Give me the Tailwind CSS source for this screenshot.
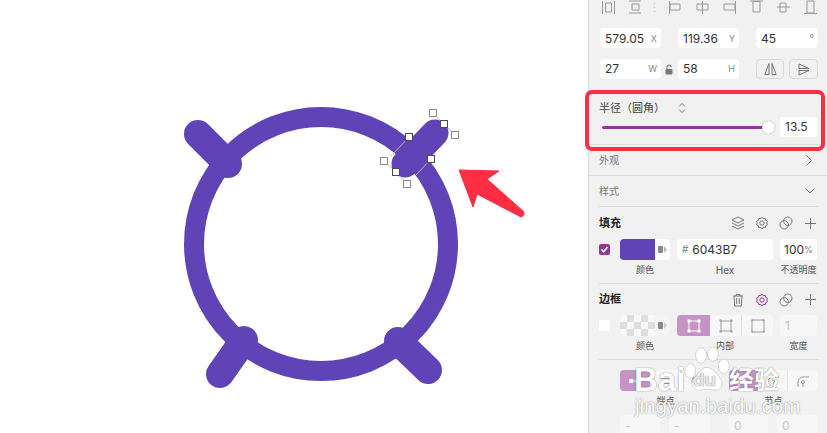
<!DOCTYPE html>
<html lang="en">
<head>
    <meta charset="UTF-8">
    <title>Radius panel</title>
    <script src="https://cdn.jsdelivr.net/npm/@tailwindcss/browser@4"></script>
</head>
<body class="bg-white overflow-hidden">
<div class="relative flex w-[827px] h-[433px] overflow-hidden font-['Inter','Noto_Sans_CJK_SC',sans-serif]">

    <!-- Canvas -->
    <div class="w-[588px] h-full shrink-0 bg-white">
        <svg width="588" height="433" viewBox="0 0 588 433" fill="none">
            <circle cx="321" cy="244" r="127" stroke="#6043B7" stroke-width="20"/>
            <g stroke="#6043B7" stroke-width="28" stroke-linecap="round">
                <path d="M198 134 L228 164"/>
                <path d="M220 374 L244 340"/>
                <path d="M398 341 L428 370"/>
                <path d="M405 164 L435 133" stroke-width="27"/>
            </g>
            <!-- selection -->
            <path d="M409 137 L391 156 M431 159 L416 175 M433 113 L444 124 M384 161 L396 172 M455 135 L444 124 M407 184 L396 172" stroke="#b9b3c9" stroke-width="1"/>
            <g fill="#fff" stroke="#8a8a8a" stroke-width="1">
                <rect x="429.5" y="109.5" width="7" height="7"/>
                <rect x="451.5" y="131.5" width="7" height="7"/>
                <rect x="380.5" y="157.5" width="7" height="7"/>
                <rect x="403.5" y="180.5" width="7" height="7"/>
            </g>
            <g fill="#fff" stroke="#4a4a55" stroke-width="1">
                <rect x="405.5" y="133.5" width="7" height="7"/>
                <rect x="440.5" y="120.5" width="7" height="7"/>
                <rect x="427.5" y="155.5" width="7" height="7"/>
                <rect x="392.5" y="168.5" width="7" height="7"/>
            </g>
            <!-- arrow -->
            <path d="M459 170 L499 171 L487 179 L523 211 Q526 215 521 217 L477 194 L473 207 Z" fill="#fd2d44" stroke="#fd2d44" stroke-width="1" stroke-linejoin="round"/>
        </svg>
    </div>

    <!-- Inspector -->
    <aside class="w-[239px] h-full shrink-0 bg-[#f1f1f1] border-l border-[#dcdcdc] text-[#333]">

        <!-- align icons -->
        <svg class="block" width="238" height="15" viewBox="0 0 238 15" fill="none" stroke="#999" stroke-width="1">
            <path d="M13.5 1v13M25.5 1v13M16.5 3h6v9h-6z"/>
            <path d="M40 1h12M40 13h12M43 4h7v6h-7z"/>
            <path d="M65.5 3v.5M65.5 7v.5M65.5 11v.5" stroke-width="1.5"/>
            <path d="M80.5 1v13M81 4h10v6H81z"/>
            <path d="M113.5 1v13M108 4h11v6h-11z"/>
            <path d="M146.5 1v13M135 4h11v6h-11z"/>
            <path d="M161 1h13M164 1.5h7V12h-7z"/>
            <path d="M188 7h13M191 3h6v9h-6z"/>
            <path d="M215 13.5h13M218 1h7v12h-7z"/>
        </svg>

        <!-- position -->
        <div class="flex pl-[11px] mt-[13px] gap-[17px] text-[12px]">
            <div class="w-[61px] h-[20px] bg-white rounded-[4px] flex items-center justify-between pl-[5px] pr-[4px] pt-[1px]"><span>579.05</span><span class="text-[9px] text-[#888]">X</span></div>
            <div class="w-[61px] h-[20px] bg-white rounded-[4px] flex items-center justify-between pl-[5px] pr-[4px] pt-[1px]"><span>119.36</span><span class="text-[9px] text-[#888]">Y</span></div>
            <div class="w-[62px] h-[20px] bg-white rounded-[4px] flex items-center justify-between pl-[5px] pr-[4px] pt-[1px]"><span>45</span><span class="text-[10px] text-[#777]">°</span></div>
        </div>

        <!-- size -->
        <div class="flex pl-[11px] mt-[11px] text-[12px]">
            <div class="w-[61px] h-[20px] bg-white rounded-[4px] flex items-center justify-between pl-[5px] pr-[4px]"><span>27</span><span class="text-[9px] text-[#888]">W</span></div>
            <div class="w-[17px] h-[20px] flex items-center justify-center">
                <svg width="9" height="11" viewBox="0 0 9 11" fill="none"><rect x="0.5" y="5" width="7" height="5.5" rx="1" fill="#777"/><path d="M2 5V3a2 2 0 0 1 4 0" stroke="#777" stroke-width="1.1"/></svg>
            </div>
            <div class="w-[61px] h-[20px] bg-white rounded-[4px] flex items-center justify-between pl-[5px] pr-[4px]"><span>58</span><span class="text-[9px] text-[#888]">H</span></div>
            <div class="ml-[17px] w-[28px] h-[20px] rounded-[4px] border border-[#d8d8d8] flex items-center justify-center">
                <svg width="13" height="12" viewBox="0 0 13 12" fill="none" stroke="#777"><path d="M5 0.5v11H0.8zM8 0.5v11h4.2z"/></svg>
            </div>
            <div class="ml-[5px] w-[29px] h-[20px] rounded-[4px] border border-[#d8d8d8] flex items-center justify-center">
                <svg width="12" height="13" viewBox="0 0 12 13" fill="none" stroke="#777"><path d="M1 1l10 4.5H1zM1 7.5h10L1 12z"/></svg>
            </div>
        </div>

        <!-- radius -->
        <div class="mt-[21px] h-[45px] border-b border-[#dcdcdc] pl-[10px] pr-[8px]">
            <div class="flex items-center h-[16px] text-[11px] text-[#444]">
                <span>半径（圆角）</span>
                <svg class="ml-[13px]" width="8" height="12" viewBox="0 0 8 12" fill="none" stroke="#777"><path d="M1 4.5L4 1.5L7 4.5M1 7.5L4 10.5L7 7.5"/></svg>
            </div>
            <div class="flex items-center mt-[1px]">
                <div class="relative w-[173px] ml-[3px] h-[3px] bg-[#8e3a94] rounded-full">
                    <div class="absolute right-0 top-[-5px] w-[13px] h-[13px] rounded-full bg-white shadow-[0_0_1px_rgba(0,0,0,.5)]"></div>
                </div>
                <div class="ml-[5px] w-[37px] h-[20px] bg-white rounded-[3px] text-[12px] flex items-center pl-[5px]">13.5</div>
            </div>
        </div>

        <div class="h-[31px] border-b border-[#dcdcdc] flex items-center justify-between pl-[10px] pr-[15px] text-[10px] text-[#777]">
            <span>外观</span>
            <svg width="6" height="11" viewBox="0 0 6 11" fill="none" stroke="#777"><path d="M0.5 0.5L5.5 5.5L0.5 10.5"/></svg>
        </div>

        <div class="ml-[10px] mr-[8px] h-[31px] border-b border-[#dcdcdc] flex items-center justify-between pr-[4px] text-[10px] text-[#777]">
            <span>样式</span>
            <svg width="10" height="6" viewBox="0 0 10 6" fill="none" stroke="#777"><path d="M0.5 0.5L5 5L9.5 0.5"/></svg>
        </div>

        <!-- fill -->
        <div class="ml-[10px] mr-[8px] h-[77px] border-b border-[#dcdcdc]">
            <div class="h-[32px] flex items-center justify-between">
                <span class="text-[11px] font-bold text-[#222]">填充</span>
                <div class="flex items-center gap-[10px] pr-[3px]">
                    <svg width="14" height="14" viewBox="0 0 14 14" fill="none" stroke="#777"><path d="M7 1l6 3-6 3-6-3zM1 7l6 3 6-3M1 10l6 3 6-3"/></svg>
                    <svg width="14" height="14" viewBox="0 0 14 14" fill="none" stroke="#777"><path d="M7 1l1.2 1.6 2-.3.5 2 1.8 1-.8 1.7.8 1.7-1.8 1-.5 2-2-.3L7 13l-1.2-1.6-2 .3-.5-2-1.8-1 .8-1.7-.8-1.7 1.8-1 .5-2 2 .3z"/><circle cx="7" cy="7" r="2.2"/></svg>
                    <svg width="14" height="14" viewBox="0 0 14 14" fill="none" stroke="#777"><circle cx="5.2" cy="8.8" r="4.2"/><circle cx="8.8" cy="5.2" r="4.2"/></svg>
                    <svg class="ml-[2px]" width="11" height="11" viewBox="0 0 11 11" fill="none" stroke="#777"><path d="M5.5 0v11M0 5.5h11"/></svg>
                </div>
            </div>
            <div class="flex items-center h-[21px]">
                <div class="w-[11px] h-[11px] rounded-[2px] bg-[#8e3a94] flex items-center justify-center">
                    <svg width="9" height="9" viewBox="0 0 9 9" fill="none" stroke="#fff" stroke-width="1.5"><path d="M1.5 4.5L3.7 6.8L7.5 2"/></svg>
                </div>
                <div class="ml-[10px] w-[50px] h-[21px] rounded-[4px] bg-white flex overflow-hidden">
                    <div class="w-[35px] bg-[#6043B7]"></div>
                    <div class="flex-1 flex items-center justify-center">
                        <svg width="9" height="9" viewBox="0 0 9 9"><rect x="0" y="1" width="5" height="7" rx="1" fill="#888"/><path d="M6 1l3 3.5L6 8z" fill="#bbb"/></svg>
                    </div>
                </div>
                <div class="ml-[7px] w-[96px] h-[21px] rounded-[4px] bg-white flex items-center pl-[5px] text-[12px]"><span class="text-[#777] mr-[4px] text-[10px]">#</span>6043B7</div>
                <div class="ml-[7px] w-[37px] h-[21px] rounded-[4px] bg-white flex items-center justify-center text-[12px]">100<span class="text-[9px] text-[#777]">%</span></div>
            </div>
            <div class="flex mt-[3px] text-[9px] text-[#555] leading-[14px]">
                <span class="ml-[21px] w-[50px] text-center">颜色</span>
                <span class="ml-[7px] w-[96px] text-center text-[10px]">Hex</span>
                <span class="ml-[7px] w-[37px] text-center whitespace-nowrap">不透明度</span>
            </div>
        </div>

        <!-- border -->
        <div class="ml-[10px] mr-[8px] h-[76px] border-b border-[#dcdcdc]">
            <div class="h-[31px] flex items-center justify-between">
                <span class="text-[11px] font-bold text-[#222]">边框</span>
                <div class="flex items-center gap-[10px] pr-[3px]">
                    <svg width="14" height="14" viewBox="0 0 14 14" fill="none" stroke="#777"><path d="M2 3h10M5 3V1.5h4V3M3 3l.8 10h6.4L11 3M5.7 5v6M8.3 5v6"/></svg>
                    <svg width="14" height="14" viewBox="0 0 14 14" fill="none" stroke="#8e3a94"><path d="M7 1l1.2 1.6 2-.3.5 2 1.8 1-.8 1.7.8 1.7-1.8 1-.5 2-2-.3L7 13l-1.2-1.6-2 .3-.5-2-1.8-1 .8-1.7-.8-1.7 1.8-1 .5-2 2 .3z"/><circle cx="7" cy="7" r="2.2"/></svg>
                    <svg width="14" height="14" viewBox="0 0 14 14" fill="none" stroke="#777"><circle cx="5.2" cy="8.8" r="4.2"/><circle cx="8.8" cy="5.2" r="4.2"/></svg>
                    <svg class="ml-[2px]" width="11" height="11" viewBox="0 0 11 11" fill="none" stroke="#777"><path d="M5.5 0v11M0 5.5h11"/></svg>
                </div>
            </div>
            <div class="flex items-center h-[21px]">
                <div class="w-[11px] h-[11px] rounded-[2px] bg-white"></div>
                <div class="ml-[10px] w-[50px] h-[21px] rounded-[4px] flex overflow-hidden bg-[repeating-conic-gradient(#dedede_0_25%,#f8f8f8_0_50%)] bg-[length:14px_14px]">
                    <div class="w-[35px]"></div>
                    <div class="flex-1 bg-[#f4f4f4] flex items-center justify-center">
                        <svg width="9" height="9" viewBox="0 0 9 9"><rect x="0" y="1" width="5" height="7" rx="1" fill="#888"/><path d="M6 1l3 3.5L6 8z" fill="#ccc"/></svg>
                    </div>
                </div>
                <div class="ml-[7px] w-[96px] h-[21px] rounded-[4px] bg-[#f7f7f7] flex overflow-hidden">
                    <div class="w-[33px] bg-[#c594c4] flex items-center justify-center">
                        <svg width="14" height="14" viewBox="0 0 14 14" fill="none" stroke="#fff"><path d="M2 2h10v10H2z"/><path d="M0.5 0.5h3v3h-3zM10.5 0.5h3v3h-3zM0.5 10.5h3v3h-3zM10.5 10.5h3v3h-3z" fill="#fff" stroke="none"/></svg>
                    </div>
                    <div class="w-[32px] border-r border-[#dcdcdc] flex items-center justify-center">
                        <svg width="14" height="14" viewBox="0 0 14 14" fill="none" stroke="#999"><path d="M2 2h10v10H2z"/><path d="M0.5 0.5h2v2h-2zM11.5 0.5h2v2h-2zM0.5 11.5h2v2h-2zM11.5 11.5h2v2h-2z" fill="#999" stroke="none"/></svg>
                    </div>
                    <div class="flex-1 flex items-center justify-center">
                        <svg width="14" height="14" viewBox="0 0 14 14" fill="none" stroke="#999"><path d="M1 1h12v12H1z"/><path d="M0.5 0.5h1.5v1.5h-1.5zM12 0.5h1.5v1.5h-1.5zM0.5 12h1.5v1.5h-1.5zM12 12h1.5v1.5h-1.5z" fill="#999" stroke="none"/></svg>
                    </div>
                </div>
                <div class="ml-[7px] w-[37px] h-[21px] rounded-[4px] bg-[#f7f7f7] flex items-center pl-[5px] text-[12px] text-[#c4c4c4]">1</div>
            </div>
            <div class="flex mt-[3px] text-[9px] text-[#555] leading-[14px]">
                <span class="ml-[21px] w-[50px] text-center">颜色</span>
                <span class="ml-[7px] w-[96px] text-center">内部</span>
                <span class="ml-[7px] w-[37px] text-center">宽度</span>
            </div>
        </div>

        <!-- ends and joins -->
        <div class="ml-[10px] mr-[8px] pt-[10px]">
            <div class="flex">
                <div class="ml-[21px] w-[91px] h-[21px] rounded-[4px] bg-[#f7f7f7] flex overflow-hidden">
                    <div class="w-[30px] bg-[#c594c4] flex items-center justify-center">
                        <svg width="12" height="8" viewBox="0 0 12 8" fill="none" stroke="#fff"><path d="M3 4h9"/><rect x="0.5" y="2.5" width="3" height="3" fill="#fff"/></svg>
                    </div>
                    <div class="w-[31px] border-r border-[#e2e2e2] flex items-center justify-center">
                        <svg width="12" height="8" viewBox="0 0 12 8" fill="none" stroke="#999"><path d="M1 1.5h10M1 6.5h10"/></svg>
                    </div>
                    <div class="flex-1 flex items-center justify-center">
                        <svg width="12" height="10" viewBox="0 0 12 10" fill="none" stroke="#999"><path d="M12 1H6a4 4 0 0 0 0 8h6"/></svg>
                    </div>
                </div>
                <div class="ml-[18px] w-[89px] h-[21px] rounded-[4px] bg-[#f7f7f7] flex overflow-hidden">
                    <div class="w-[29px] bg-[#c594c4] flex items-center justify-center">
                        <svg width="12" height="12" viewBox="0 0 12 12" fill="none" stroke="#fff"><path d="M1 12V2h11"/><rect x="4" y="4" width="3" height="3" fill="#fff"/></svg>
                    </div>
                    <div class="w-[30px] border-r border-[#e2e2e2] flex items-center justify-center">
                        <svg width="12" height="12" viewBox="0 0 12 12" fill="none" stroke="#999"><path d="M1 12V5l3-3h8"/><circle cx="6" cy="7" r="1.5"/><path d="M6 8.5V12"/></svg>
                    </div>
                    <div class="flex-1 flex items-center justify-center">
                        <svg width="12" height="12" viewBox="0 0 12 12" fill="none" stroke="#999"><path d="M1 12V7a5 5 0 0 1 5-5h6"/><circle cx="6" cy="7" r="1.5"/><path d="M6 8.5V12"/></svg>
                    </div>
                </div>
            </div>
            <div class="flex mt-[3px] text-[9px] text-[#555] leading-[14px]">
                <span class="ml-[21px] w-[91px] text-center">端点</span>
                <span class="ml-[18px] w-[89px] text-center">节点</span>
            </div>
            <div class="flex mt-[7px] text-[12px] text-[#c8c8c8]">
                <div class="ml-[21px] w-[40px] h-[21px] rounded-[4px] bg-[#f7f7f7] pl-[5px] flex items-center">-</div>
                <div class="ml-[9px] w-[41px] h-[21px] rounded-[4px] bg-[#f7f7f7] pl-[5px] flex items-center">-</div>
                <div class="ml-[19px] w-[39px] h-[21px] rounded-[4px] bg-[#f7f7f7] pl-[5px] flex items-center">0</div>
                <div class="ml-[9px] w-[41px] h-[21px] rounded-[4px] bg-[#f7f7f7] pl-[5px] flex items-center">0</div>
            </div>
        </div>
    </aside>

    <!-- red annotation box -->
    <div class="absolute left-[585px] top-[90px] w-[240px] h-[61px] border-[4px] border-[#fd2d44] rounded-[7px]"></div>

    <!-- watermark -->
    <div class="absolute left-[634px] top-[345px] w-[160px] h-[72px] text-white [text-shadow:0_0_1px_rgba(0,0,0,.45),0_0_2px_rgba(0,0,0,.2)]">
        <span class="absolute left-0 top-[17px] font-['Liberation_Sans'] font-bold text-[33px] leading-[36px]">Bai</span>
        <svg class="absolute left-[50px] top-[2px]" width="46" height="48" viewBox="0 0 38 40" fill="#fff" stroke="#c4c4c4" stroke-width="0.6">
            <ellipse cx="5" cy="20" rx="4.5" ry="6"/>
            <ellipse cx="14" cy="7" rx="4.5" ry="6.5"/>
            <ellipse cx="24" cy="6" rx="4.5" ry="6"/>
            <ellipse cx="33" cy="16" rx="4.5" ry="6"/>
            <path d="M19 17c5 0 7 5 11 9 4 5 0 11-5 10-4-1-8-1-12 0-5 1-9-5-5-10 4-4 6-9 11-9z"/>
        </svg>
        <span class="absolute left-[59px] top-[24px] font-['Liberation_Sans'] font-bold text-[19px] leading-[22px] text-[#e6e6e6]">du</span>
        <span class="absolute left-[95px] top-[21px] font-bold text-[25px] leading-[29px] whitespace-nowrap">经验</span>
        <span class="absolute left-[1px] top-[49px] font-['Liberation_Sans'] text-[20.5px] leading-[24px] whitespace-nowrap">jingyan.baidu.com</span>
    </div>
</div>
</body>
</html>
